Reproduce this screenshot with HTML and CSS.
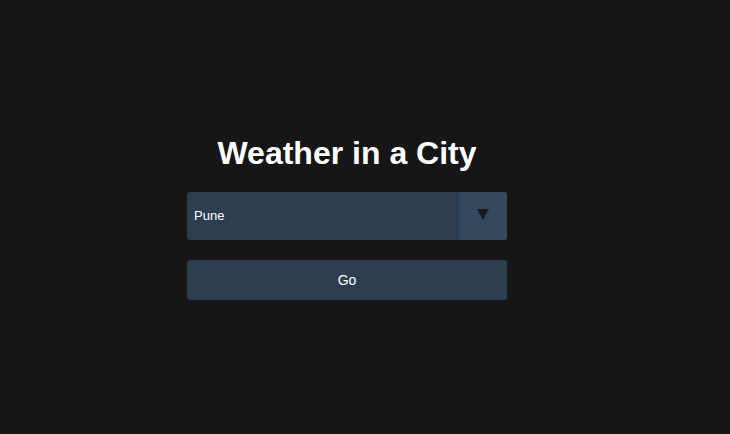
FILE: index.html
```html
<!DOCTYPE html>
<html>
<head>
<meta charset="utf-8">
<link rel="stylesheet" href="styles.css">
</head>
<body>
<main class="wrap">
  <h1 class="title">Weather in a City</h1>
  <div class="select">
    <span class="select-value">Pune</span>
    <span class="select-arrow"><span class="tri"></span></span>
  </div>
  <button class="go">Go</button>
</main>
</body>
</html>
```
FILE: styles.css
```css
html, body {
  margin: 0;
  height: 100%;
  background: #161616;
  font-family: "Liberation Sans", Arial, sans-serif;
  color: #fff;
}
.wrap {
  box-sizing: border-box;
  height: 100%;
  padding-right: 36px;
  display: flex;
  flex-direction: column;
  align-items: center;
  justify-content: center;
}
.title {
  margin: 0 0 20px;
  font-size: 32px;
  line-height: 37px;
  font-weight: bold;
}
.select {
  width: 320px;
  height: 48px;
  display: flex;
  background: #2c3e50;
  border-radius: 3px;
  overflow: hidden;
  margin-bottom: 20px;
}
.select-value {
  flex: 1;
  display: flex;
  align-items: center;
  padding-left: 7px;
  font-size: 13px;
}
.select-arrow {
  width: 48px;
  background: #34495e;
  display: flex;
  align-items: center;
  justify-content: center;
}
.tri {
  width: 0;
  height: 0;
  border-left: 6px solid transparent;
  border-right: 6px solid transparent;
  border-top: 11px solid #17191c;
  margin-bottom: 3px;
}
.go {
  width: 320px;
  height: 40px;
  border: none;
  border-radius: 3px;
  background: #2c3e50;
  color: #fff;
  font-family: "Liberation Sans", Arial, sans-serif;
  font-size: 14px;
  padding: 0;
}
```
